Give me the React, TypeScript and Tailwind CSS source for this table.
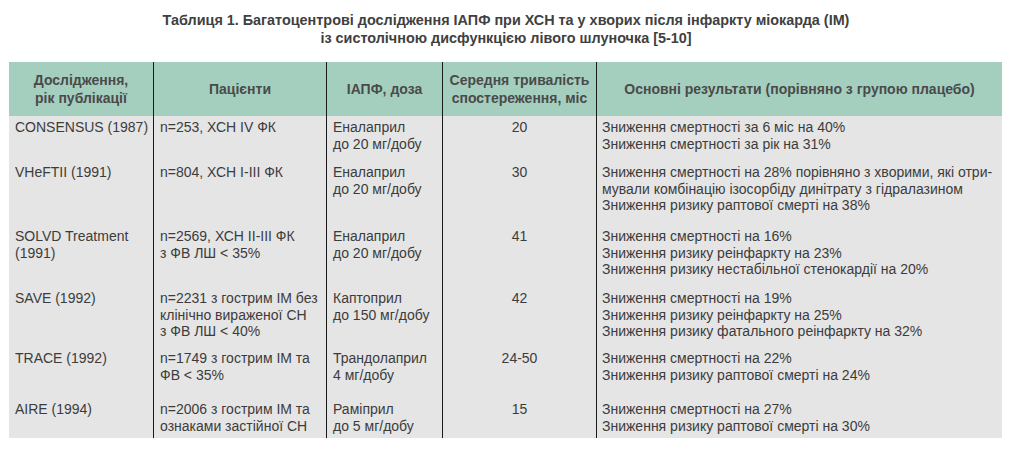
import React from 'react';

type Row = {
  study: string[];
  patients: string[];
  drug: string[];
  months: string;
  results: string[];
  h: string;
};

const rows: Row[] = [
  {
    study: ['CONSENSUS (1987)'],
    patients: ['n=253, ХСН IV ФК'],
    drug: ['Еналаприл', 'до 20 мг/добу'],
    months: '20',
    results: ['Зниження смертності за 6 міс на 40%', 'Зниження смертності за рік на 31%'],
    h: 'h-[45px]',
  },
  {
    study: ['VHeFTII (1991)'],
    patients: ['n=804, ХСН I-III ФК'],
    drug: ['Еналаприл', 'до 20 мг/добу'],
    months: '30',
    results: [
      'Зниження смертності на 28% порівняно з хворими, які отри-',
      'мували комбінацію ізосорбіду динітрату з гідралазином',
      'Зниження ризику раптової смерті на 38%',
    ],
    h: 'h-[64px]',
  },
  {
    study: ['SOLVD Treatment', '(1991)'],
    patients: ['n=2569, ХСН II-III ФК', 'з ФВ ЛШ < 35%'],
    drug: ['Еналаприл', 'до 20 мг/добу'],
    months: '41',
    results: [
      'Зниження смертності на 16%',
      'Зниження ризику реінфаркту на 23%',
      'Зниження ризику нестабільної стенокардії на 20%',
    ],
    h: 'h-[62px]',
  },
  {
    study: ['SAVE (1992)'],
    patients: ['n=2231 з гострим ІМ без', 'клінічно вираженої СН', 'з ФВ ЛШ < 40%'],
    drug: ['Каптоприл', 'до 150 мг/добу'],
    months: '42',
    results: [
      'Зниження смертності на 19%',
      'Зниження ризику реінфаркту на 25%',
      'Зниження ризику фатального реінфаркту на 32%',
    ],
    h: 'h-[60px]',
  },
  {
    study: ['TRACE (1992)'],
    patients: ['n=1749 з гострим ІМ та', 'ФВ < 35%'],
    drug: ['Трандолаприл', '4 мг/добу'],
    months: '24-50',
    results: ['Зниження смертності на 22%', 'Зниження ризику раптової смерті на 24%'],
    h: 'h-[51px]',
  },
  {
    study: ['AIRE (1994)'],
    patients: ['n=2006 з гострим ІМ та', 'ознаками застійної СН'],
    drug: ['Раміприл', 'до 5 мг/добу'],
    months: '15',
    results: ['Зниження смертності на 27%', 'Зниження ризику раптової смерті на 30%'],
    h: 'h-[40px]',
  },
];

const Lines = ({ items }: { items: string[] }) => (
  <>
    {items.map((t, i) => (
      <div key={i}>{t}</div>
    ))}
  </>
);

const cols = 'grid grid-cols-[144px_173px_116px_154px_406px]';

export default function App() {
  return (
    <div className="w-[1012px] h-[458px] bg-white font-['Liberation_Sans',Arial,sans-serif]">
      <div className="pt-[11px] text-center text-[14.4px] leading-[18px] font-bold text-[#404040]">
        <div>Таблиця 1. Багатоцентрові дослідження ІАПФ при ХСН та у хворих після інфаркту міокарда (ІМ)</div>
        <div>із систолічною дисфункцією лівого шлуночка [5-10]</div>
      </div>

      <div className="mt-[15px] ml-[9px] w-[993px]">
        <div className={`${cols} h-[54px] bg-[#a4cfbf] text-[14px] leading-[18px] font-bold text-[#4a4a4a]`}>
          <div className="flex items-center justify-center text-center">
            Дослідження,<br />рік публікації
          </div>
          <div className="flex items-center justify-center border-l border-[#1a1a1a]">Пацієнти</div>
          <div className="flex items-center justify-center border-l border-[#1a1a1a]">ІАПФ, доза</div>
          <div className="flex items-center justify-center text-center whitespace-nowrap border-l border-[#1a1a1a]">
            Середня тривалість<br />спостереження, міс
          </div>
          <div className="flex items-center justify-center border-l border-[#1a1a1a]">
            Основні результати (порівняно з групою плацебо)
          </div>
        </div>

        <div className="bg-[#e5e5e5] text-[14px] leading-[16.5px] text-[#3c3c3c]">
          {rows.map((r, i) => (
            <div key={i} className={`${cols} ${r.h}`}>
              <div className="pl-[6px] pt-[3px] whitespace-nowrap">
                <Lines items={r.study} />
              </div>
              <div className="pl-[6px] pt-[3px] whitespace-nowrap border-l border-[#1a1a1a]">
                <Lines items={r.patients} />
              </div>
              <div className="pl-[6px] pt-[3px] whitespace-nowrap border-l border-[#1a1a1a]">
                <Lines items={r.drug} />
              </div>
              <div className="pt-[3px] text-center border-l border-[#1a1a1a]">{r.months}</div>
              <div className="pl-[5px] pt-[3px] whitespace-nowrap border-l border-[#1a1a1a]">
                <Lines items={r.results} />
              </div>
            </div>
          ))}
        </div>
      </div>
    </div>
  );
}
